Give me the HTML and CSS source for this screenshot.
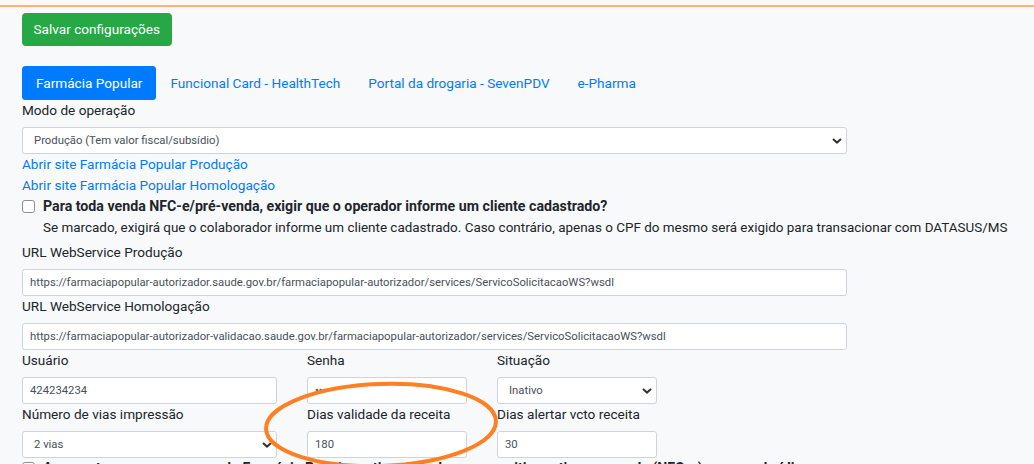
FILE: index.html
```html
<!DOCTYPE html>
<html lang="pt-BR">
<head>
    <meta charset="UTF-8">
    <meta name="viewport" content="width=device-width, initial-scale=1.0">
    <title>Configurações - Farmácia Popular</title>
    <link rel="stylesheet" href="styles.css">
</head>
<body>
    <div class="topbar"></div>

    <main class="config">
        <div class="actions">
            <button class="btn btn-success" type="button">Salvar configurações</button>
        </div>

        <ul class="nav-pills">
            <li><a class="nav-link active" href="#">Farmácia Popular</a></li>
            <li><a class="nav-link" href="#">Funcional Card - HealthTech</a></li>
            <li><a class="nav-link" href="#">Portal da drogaria - SevenPDV</a></li>
            <li><a class="nav-link" href="#">e-Pharma</a></li>
        </ul>

        <div class="tab-pane">
            <div class="row">
                <div class="field col-9">
                    <label for="modo">Modo de operação</label>
                    <select id="modo" class="form-control">
                        <option>Produção (Tem valor fiscal/subsídio)</option>
                        <option>Homologação (Sem valor fiscal)</option>
                    </select>
                </div>
            </div>

            <a class="link" href="#">Abrir site Farmácia Popular Produção</a>
            <a class="link" href="#">Abrir site Farmácia Popular Homologação</a>

            <div class="form-check">
                <label class="check-label">
                    <input type="checkbox">
                    <span>Para toda venda NFC-e/pré-venda, exigir que o operador informe um cliente cadastrado?</span>
                </label>
                <p class="check-help">Se marcado, exigirá que o colaborador informe um cliente cadastrado. Caso contrário, apenas o CPF do mesmo será exigido para transacionar com DATASUS/MS</p>
            </div>

            <div class="row">
                <div class="field col-9">
                    <label for="urlProd">URL WebService Produção</label>
                    <input id="urlProd" class="form-control" type="text" value="https://farmaciapopular-autorizador.saude.gov.br/farmaciapopular-autorizador/services/ServicoSolicitacaoWS?wsdl">
                </div>
            </div>

            <div class="row">
                <div class="field col-9">
                    <label for="urlHomolog">URL WebService Homologação</label>
                    <input id="urlHomolog" class="form-control" type="text" value="https://farmaciapopular-autorizador-validacao.saude.gov.br/farmaciapopular-autorizador/services/ServicoSolicitacaoWS?wsdl">
                </div>
            </div>

            <div class="row">
                <div class="field col-3">
                    <label for="usuario">Usuário</label>
                    <input id="usuario" class="form-control" type="text" value="424234234">
                </div>
                <div class="field col-2">
                    <label for="senha">Senha</label>
                    <input id="senha" class="form-control" type="password" value="12345">
                </div>
                <div class="field col-2">
                    <label for="situacao">Situação</label>
                    <select id="situacao" class="form-control">
                        <option>Inativo</option>
                        <option>Ativo</option>
                    </select>
                </div>
            </div>

            <div class="row">
                <div class="field col-3">
                    <label for="vias">Número de vias impressão</label>
                    <select id="vias" class="form-control">
                        <option>2 vias</option>
                        <option>1 via</option>
                    </select>
                </div>
                <div class="field col-2">
                    <label for="validade">Dias validade da receita</label>
                    <input id="validade" class="form-control" type="text" value="180">
                </div>
                <div class="field col-2">
                    <label for="alerta">Dias alertar vcto receita</label>
                    <input id="alerta" class="form-control" type="text" value="30">
                </div>
            </div>

            <div class="form-check">
                <label class="check-label">
                    <input type="checkbox">
                    <span>Apresentar mensagem quando Farmácia Popular estiver fora do ar e permitir continuar a venda (NFC-e) sem o subsídio</span>
                </label>
            </div>
        </div>
    </main>

    <!-- marcação de destaque desenhada por cima do formulário -->
    <svg class="highlight" width="1034" height="464" viewBox="0 0 1034 464">
        <ellipse cx="381" cy="425" rx="115" ry="41" transform="rotate(-2 381 425)"></ellipse>
    </svg>
</body>
</html>
```

FILE: styles.css
```css
:root {
    --primary: #007bff;
    --success: #28a745;
    --body-color: #212529;
    --input-color: #495057;
    --border: #ced4da;
    --bg: #f8f9fa;
}

html {
    font-size: 14px;
}

body {
    margin: 0;
    font-family: Roboto, "Open Sans", sans-serif;
    font-size: 13.6px;
    line-height: 21px;
    color: var(--body-color);
    background-color: var(--bg);
    position: relative;
    overflow: hidden;
}

/* faixa do topo */
.topbar {
    height: 5px;
    background-color: #fffaf3;
    border-bottom: 2px solid #ffb36b;
}

.config {
    padding: 0 22px;
}

/* botões */
.actions {
    padding-top: 6px;
}

.btn {
    font-family: inherit;
    font-size: 13.6px;
    line-height: 21px;
    padding: 5px 10.5px;
    border: 1px solid transparent;
    border-radius: 3.5px;
    cursor: pointer;
}

.btn-success {
    color: #fff;
    background-color: var(--success);
    border-color: var(--success);
}

/* abas */
.nav-pills {
    display: flex;
    list-style: none;
    margin: 20px 0 0;
    padding: 0;
}

.nav-link {
    display: block;
    padding: 6.5px 14px;
    color: var(--primary);
    text-decoration: none;
    border-radius: 3.5px;
}

.nav-link.active {
    color: #fff;
    background-color: var(--primary);
}

/* formulário */
.row {
    display: flex;
    gap: 30px;
}

.col-9 { width: 825px; }
.col-3 { width: 255px; }
.col-2 { width: 160px; }

.field label {
    display: block;
    margin-bottom: 6px;
}

.form-control {
    display: block;
    box-sizing: border-box;
    width: 100%;
    height: 27px;
    padding: 3px 7px;
    font-family: inherit;
    font-size: 11.3px;
    line-height: 19px;
    color: var(--input-color);
    background-color: #fff;
    border: 1px solid var(--border);
    border-radius: 2.8px;
}

select.form-control {
    appearance: none;
    -webkit-appearance: none;
    padding-left: 11px;
    background-image: url("data:image/svg+xml,%3csvg xmlns='http://www.w3.org/2000/svg' width='10' height='6' viewBox='0 0 10 6'%3e%3cpath fill='none' stroke='%23333' stroke-width='2' d='M1 1l4 3.6L9 1'/%3e%3c/svg%3e");
    background-repeat: no-repeat;
    background-position: right 4px center;
    background-size: 10px 6px;
}

.link {
    display: block;
    color: var(--primary);
    text-decoration: none;
}

/* checkbox com texto de ajuda */
.form-check {
    margin-bottom: 4px;
}

.check-label {
    display: flex;
    align-items: center;
    gap: 8px;
    font-size: 14.2px;
    font-weight: 700;
    white-space: nowrap;
}

.check-label input {
    appearance: none;
    -webkit-appearance: none;
    flex: none;
    width: 13px;
    height: 13px;
    margin: 0;
    background: #fff;
    border: 1px solid #8f8f8f;
    border-radius: 3px;
}

.check-help {
    margin: 0 0 0 21px;
    font-size: 13.45px;
    white-space: nowrap;
}

/* destaque laranja por cima do conteúdo */
.highlight {
    position: absolute;
    top: 0;
    left: 0;
    pointer-events: none;
}

.highlight ellipse {
    fill: none;
    stroke: #ff8024;
    stroke-width: 4;
}
```
